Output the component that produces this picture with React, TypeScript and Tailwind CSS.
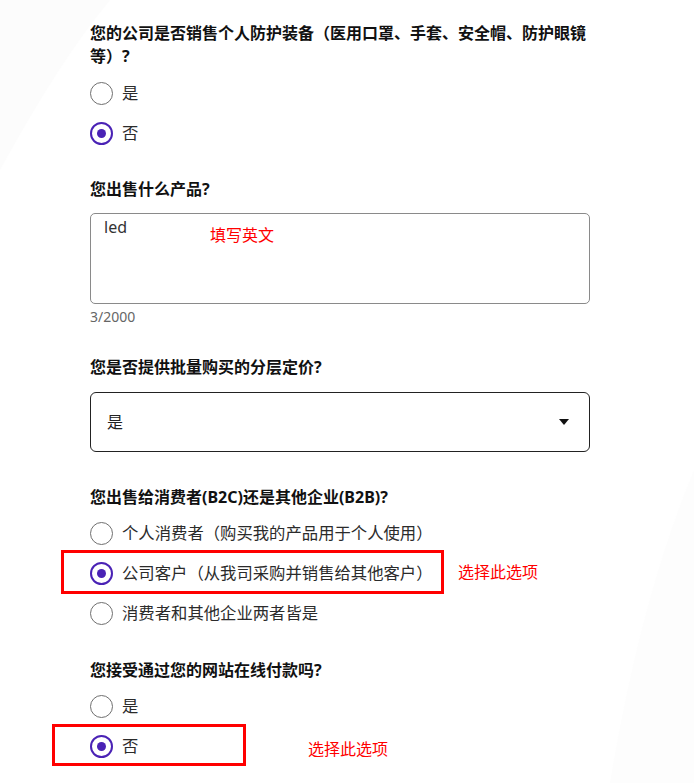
import { FC, ReactNode } from 'react';

const FONT = { fontFamily: '"Noto Sans", "Noto Sans CJK SC", sans-serif' };

interface RadioRowProps {
  label: string;
  checked?: boolean;
  children?: ReactNode;
}

const RadioRow: FC<RadioRowProps> = ({ label, checked, children }) => (
  <div className="relative flex h-[40px] items-center gap-[9px]">
    <span
      className={
        checked
          ? 'flex h-[23px] w-[23px] shrink-0 items-center justify-center rounded-full border-[2.5px] border-[#4a22b5]'
          : 'flex h-[23px] w-[23px] shrink-0 items-center justify-center rounded-full border-[1.5px] border-[#6f6f6f]'
      }
    >
      {checked && <span className="h-[9px] w-[9px] rounded-full bg-[#4a22b5]" />}
    </span>
    <span className="text-[16.35px] leading-[24px] text-[#2b2b2b]">{label}</span>
    {children}
  </div>
);

const Title: FC<{ children: ReactNode }> = ({ children }) => (
  <h2 className="text-[16px] font-bold leading-[23px] text-[#111]">{children}</h2>
);

const Note: FC<{ children: ReactNode; className: string }> = ({ children, className }) => (
  <span className={`absolute text-[16px] leading-[20px] text-[#ff0000] ${className}`}>{children}</span>
);

export default function App() {
  return (
    <div className="relative h-[783px] w-[694px] overflow-hidden bg-white" style={FONT}>
      {/* faint backdrop swooshes */}
      <svg className="pointer-events-none absolute inset-0" width="694" height="783">
        <path d="M0 0 L110 0 Q60 60 0 170 Z" fill="#fcfcfc" />
        <path d="M610 783 Q640 600 694 470 L694 783 Z" fill="#fdfdfd" />
      </svg>

      <div className="relative ml-[90px] w-[500px] pt-[22px]">
        <Title>您的公司是否销售个人防护装备（医用口罩、手套、安全帽、防护眼镜等）?</Title>
        <div className="mt-[5px]">
          <RadioRow label="是" />
          <RadioRow label="否" checked />
        </div>

        <div className="mt-[25px]">
          <Title>您出售什么产品?</Title>
          <div className="relative mt-[12px] h-[91px] rounded-[5px] border border-[#8a8a8a] px-[13px] pt-[1px]">
            <span className="text-[16px] leading-[22px] text-[#333]">led</span>
            <Note className="left-[119px] top-[11px]">填写英文</Note>
          </div>
          <div className="mt-[3px] text-[14px] leading-[20px] text-[#666]">3/2000</div>
        </div>

        <div className="mt-[29px]">
          <Title>您是否提供批量购买的分层定价?</Title>
          <div className="mt-[13px] flex h-[60px] items-center justify-between rounded-[6px] border border-[#222] pl-[16px] pr-[20px]">
            <span className="text-[16px] text-[#222]">是</span>
            <svg width="10" height="6" viewBox="0 0 10 6">
              <path d="M0 0 H10 L5 6 Z" fill="#111" />
            </svg>
          </div>
        </div>

        <div className="mt-[34px]">
          <Title>您出售给消费者(B2C)还是其他企业(B2B)?</Title>
          <div className="mt-[4px]">
            <RadioRow label="个人消费者（购买我的产品用于个人使用）" />
            <RadioRow label="公司客户（从我司采购并销售给其他客户）" checked>
              <span className="absolute left-[-29px] top-[-3px] h-[44px] w-[383px] border-[3px] border-[#ff0000]" />
              <Note className="left-[368px] top-[9px]">选择此选项</Note>
            </RadioRow>
            <RadioRow label="消费者和其他企业两者皆是" />
          </div>
        </div>

        <div className="mt-[26px]">
          <Title>您接受通过您的网站在线付款吗?</Title>
          <div className="mt-[4px]">
            <RadioRow label="是" />
            <RadioRow label="否" checked>
              <span className="absolute left-[-38px] top-[-2px] h-[42px] w-[194px] border-[3px] border-[#ff0000]" />
              <Note className="left-[218px] top-[13px]">选择此选项</Note>
            </RadioRow>
          </div>
        </div>
      </div>
    </div>
  );
}
